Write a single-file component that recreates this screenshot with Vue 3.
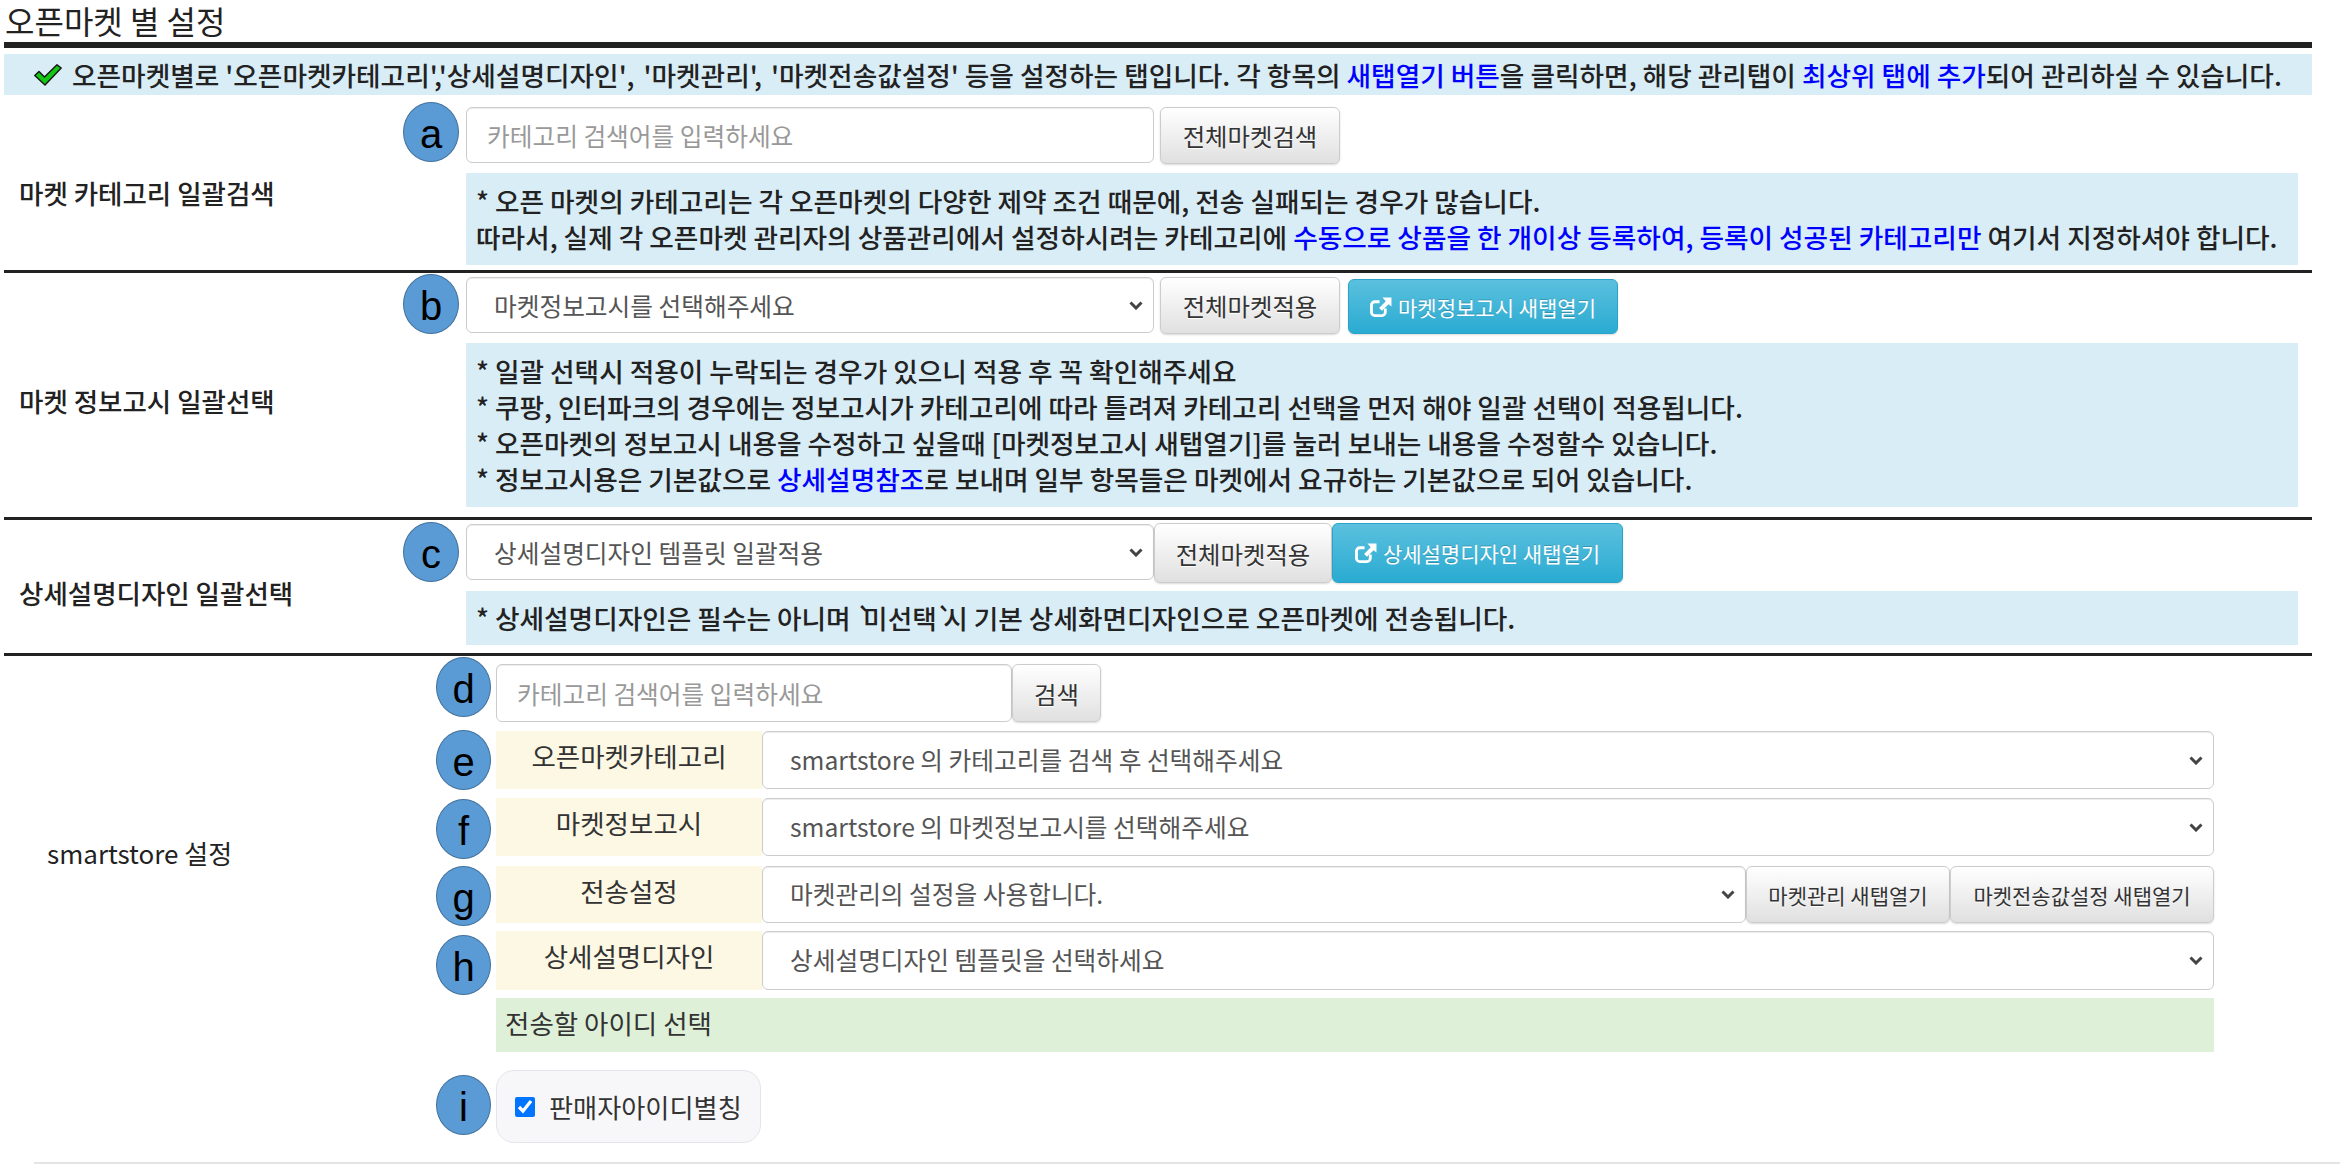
<script setup>
const noteB = [
  '* 일괄 선택시 적용이 누락되는 경우가 있으니 적용 후 꼭 확인해주세요',
  '* 쿠팡, 인터파크의 경우에는 정보고시가 카테고리에 따라 틀려져 카테고리 선택을 먼저 해야 일괄 선택이 적용됩니다.',
  '* 오픈마켓의 정보고시 내용을 수정하고 싶을때 [마켓정보고시 새탭열기]를 눌러 보내는 내용을 수정할수 있습니다.',
]
</script>

<template>
  <div class="page">
    <h1 class="title">오픈마켓 별 설정</h1>
    <div class="rule thick"></div>
    <div class="banner">
      <svg class="check" viewBox="0 0 28 22" width="28" height="22"><path d="M.8 11.5 5 7.5l5.5 5.5L23 .8l4.2 3.2L11 21z" fill="#12c812" stroke="#1a1a1a" stroke-width="1.5" stroke-linejoin="round"/></svg>
      <span>오픈마켓별로 '오픈마켓카테고리','상세설명디자인'<span class="wide">, '마켓관리', </span>'마켓전송값설정' 등을 설정하는 탭입니다. 각 항목의 <b>새탭열기 버튼</b>을 클릭하면, 해당 관리탭이 <b>최상위 탭에 추가</b>되어 관리하실 수 있습니다.</span>
    </div>

    <section class="sec sec-a">
      <div class="label">마켓 카테고리 일괄검색</div>
      <div class="body">
        <div class="ctl">
          <span class="badge ba">a</span>
          <input class="field w688" placeholder="카테고리 검색어를 입력하세요" />
          <button class="btn w180 ml6">전체마켓검색</button>
        </div>
        <div class="note h92">
          <p>* 오픈 마켓의 카테고리는 각 오픈마켓의 다양한 제약 조건 때문에, 전송 실패되는 경우가 많습니다.</p>
          <p>따라서, 실제 각 오픈마켓 관리자의 상품관리에서 설정하시려는 카테고리에 <b>수동으로 상품을 한 개이상 등록하여, 등록이 성공된 카테고리만</b> 여기서 지정하셔야 합니다.</p>
        </div>
      </div>
    </section>
    <div class="rule"></div>

    <section class="sec sec-b">
      <div class="label">마켓 정보고시 일괄선택</div>
      <div class="body">
        <div class="ctl">
          <span class="badge bb">b</span>
          <select class="field w688"><option>마켓정보고시를 선택해주세요</option></select>
          <button class="btn w180 ml6">전체마켓적용</button>
          <button class="btn info ml8 w270">
            <svg class="ext" viewBox="0 0 23 21" width="22" height="20"><path d="M16 12v4a3.5 3.5 0 0 1-3.5 3.5H5A3.5 3.5 0 0 1 1.5 16V8.5A3.5 3.5 0 0 1 5 5h5" fill="none" stroke="#fff" stroke-width="3"/><path d="M13 .5h9.5V10l-3-2.5-7 7-3-3 7-7z" fill="#fff"/></svg>
            마켓정보고시 새탭열기
          </button>
        </div>
        <div class="note h164">
          <p v-for="line in noteB" :key="line">{{ line }}</p>
          <p>* 정보고시용은 기본값으로 <b>상세설명참조</b>로 보내며 일부 항목들은 마켓에서 요규하는 기본값으로 되어 있습니다.</p>
        </div>
      </div>
    </section>
    <div class="rule"></div>

    <section class="sec sec-c">
      <div class="label">상세설명디자인 일괄선택</div>
      <div class="body">
        <div class="ctl">
          <span class="badge bc">c</span>
          <select class="field w688"><option>상세설명디자인 템플릿 일괄적용</option></select>
          <button class="btn w178 tall">전체마켓적용</button>
          <button class="btn info w291 tall">
            <svg class="ext" viewBox="0 0 23 21" width="22" height="20"><path d="M16 12v4a3.5 3.5 0 0 1-3.5 3.5H5A3.5 3.5 0 0 1 1.5 16V8.5A3.5 3.5 0 0 1 5 5h5" fill="none" stroke="#fff" stroke-width="3"/><path d="M13 .5h9.5V10l-3-2.5-7 7-3-3 7-7z" fill="#fff"/></svg>
            상세설명디자인 새탭열기
          </button>
        </div>
        <div class="note h54">
          <p>* 상세설명디자인은 필수는 아니며 <span class="tick">`</span>미선택<span class="tick">`</span>시 기본 상세화면디자인으로 오픈마켓에 전송됩니다.</p>
        </div>
      </div>
    </section>
    <div class="rule"></div>

    <section class="sec sec-d">
      <div class="label store">smartstore 설정</div>
      <div class="body2">
        <div class="r rd">
          <span class="badge b2 bd">d</span>
          <input class="field w515" placeholder="카테고리 검색어를 입력하세요" />
          <button class="btn small-search">검색</button>
        </div>
        <div class="r re">
          <span class="badge b2 be">e</span>
          <div class="tag">오픈마켓카테고리</div>
          <select class="field grow"><option>smartstore 의 카테고리를 검색 후 선택해주세요</option></select>
        </div>
        <div class="r rf">
          <span class="badge b2 bf">f</span>
          <div class="tag">마켓정보고시</div>
          <select class="field grow"><option>smartstore 의 마켓정보고시를 선택해주세요</option></select>
        </div>
        <div class="r rg">
          <span class="badge b2 bg">g</span>
          <div class="tag">전송설정</div>
          <select class="field grow"><option>마켓관리의 설정을 사용합니다.</option></select>
          <button class="btn sm w204">마켓관리 새탭열기</button>
          <button class="btn sm w264">마켓전송값설정 새탭열기</button>
        </div>
        <div class="r rh">
          <span class="badge b2 bh">h</span>
          <div class="tag">상세설명디자인</div>
          <select class="field grow"><option>상세설명디자인 템플릿을 선택하세요</option></select>
        </div>
        <div class="green">전송할 아이디 선택</div>
        <div class="r ri">
          <span class="badge b2 bi">i</span>
          <label class="seller"><input type="checkbox" checked /><span>판매자아이디별칭</span></label>
        </div>
      </div>
    </section>
    <div class="rule light"></div>
  </div>
</template>

<style>
html, body { margin: 0; background: #fff; }
</style>

<style scoped>
.page {
  width: 2340px; height: 1173px; box-sizing: border-box; padding-top: 1px;
  font-family: "Noto Sans CJK KR", "Noto Sans", sans-serif; color: #222; font-size: 26.7px; position: relative;
}
.title { margin: 0 0 0 5px; height: 41px; font-size: 32px; line-height: 38px; font-weight: 400; color: #222; white-space: nowrap; }
.rule { height: 3px; background: #222; margin: 0 28px 0 4px; }
.rule.thick { height: 6px; }
.rule.light { height: 2px; background: #e4e4e4; margin: 0 0 0 34px; }
.banner {
  margin: 6px 28px 0 4px; height: 41px; background: #d9edf7; display: flex; align-items: center; padding-left: 30px;
  gap: 10px; font-size: 26.7px; white-space: nowrap; color: #222; font-weight: 500;
}
.wide { word-spacing: 3px; }
.banner b, .note b { font-weight: 500; color: #00f; }
.check { flex: none; }
.sec { display: grid; grid-template-columns: 466px 1fr; margin-right: 28px; }
.label { padding-left: 19px; font-size: 26.5px; align-self: center; color: #222; white-space: nowrap; padding-top: 11px; font-weight: 500; }
.sec-a { height: 175px; }
.sec-a .body { padding-top: 12px; }
.sec-a .label { padding-top: 20px; }
.sec-b { height: 244px; }
.sec-b .body { padding-top: 4px; }
.sec-c { height: 133px; }
.sec-c .body { padding-top: 4px; }
.sec-d { grid-template-columns: 496px 1fr; height: 506px; }
.label.store { padding-left: 47px; padding-top: 0; padding-bottom: 114px; font-size: 26px; font-weight: 400; }
.body { min-width: 0; }
.ctl { display: flex; position: relative; align-items: flex-start; height: 56px; }
.badge {
  position: absolute; left: -63px; width: 56px; height: 60px; box-sizing: border-box; border-radius: 50%;
  background: #5b9bd5; border: 1.5px solid #41719c; color: #000; display: flex; align-items: center; justify-content: center;
  font-size: 40px; line-height: 1; font-family: "Liberation Sans", sans-serif; padding-top: 3px;
}
.ba { top: -5px; }
.bb { top: -3px; }
.bc { top: -2px; }
.badge.b2 { left: -60px; width: 55px; }
.bd { top: -7px; }
.be { top: -1px; }
.bf { top: 1px; }
.bg { top: 0; }
.bh { top: 4px; }
.bi { top: 5px; }
.field {
  box-sizing: border-box; height: 56px; background-color: #fff; border: 1px solid #ccc; border-radius: 6px; font: inherit; font-size: 24.7px;
  color: #555; padding: 0 20px; box-shadow: inset 0 1px 1px rgba(0,0,0,.075); outline: none; min-width: 0;
}
.field::placeholder { color: #999; opacity: 1; }
select.field {
  padding: 0 30px 0 27px; appearance: none; -webkit-appearance: none;
  background-image: url("data:image/svg+xml,%3Csvg xmlns='http://www.w3.org/2000/svg' width='14' height='9'%3E%3Cpath d='M1.5 1.5 7 7l5.5-5.5' fill='none' stroke='%23444' stroke-width='3'/%3E%3C/svg%3E");
  background-repeat: no-repeat; background-position: right 10px center; background-size: 14px 9px;
}
.r select.field { padding-bottom: 3px; }
.w688 { width: 688px; flex: none; }
.w515 { width: 516px; flex: none; }
.grow { flex: 1; }
.btn {
  box-sizing: border-box; height: 57px; border: 1px solid #ccc; border-radius: 6px; font: inherit; font-size: 24.4px; color: #333;
  background: linear-gradient(#fff, #e0e0e0); padding: 0; text-shadow: 0 1px 0 #fff; box-shadow: 0 1px 2px rgba(0,0,0,.15); flex: none; white-space: nowrap;
}
.w180 { width: 180px; }
.w178 { width: 178px; }
.ml6 { margin-left: 6px; }
.ml8 { margin-left: 8px; }
.btn.info {
  background: linear-gradient(#5bc0de, #2aabd2); border-color: #28a4c9; color: #fff; font-size: 21px; text-shadow: 0 -1px 0 rgba(0,0,0,.2);
  display: flex; align-items: center; justify-content: center; gap: 6px;
}
.ml8.info { height: 55px; margin-top: 2px; }
.w270 { width: 270px; }
.w291 { width: 291px; }
.tall { height: 60px; margin-top: -1px; }
.note {
  box-sizing: border-box; margin: 10px 14px 0 0; background: #d9edf7; padding: 0 0 0 10px; display: flex; flex-direction: column;
  justify-content: center; color: #222; font-size: 26.7px; line-height: 36px; white-space: nowrap; font-weight: 500;
}
.note p { margin: 0; }
.tick { letter-spacing: -10px; }
.h92 { height: 92px; }
.h164 { height: 164px; }
.h54 { height: 54px; margin-top: 11px; }
.body2 { display: flex; flex-direction: column; width: 1718px; }
.r { display: flex; position: relative; align-items: stretch; }
.rd { margin-top: 8px; height: 58px; }
.re { margin-top: 9px; height: 58px; }
.rf { margin-top: 9px; height: 58px; }
.rg { margin-top: 10px; height: 57px; }
.rh { margin-top: 8px; height: 59px; }
.r .field { height: 100%; }
.tag {
  width: 266px; flex: none; background: #fcf8e3; text-align: center; font-size: 26.5px; color: #333; line-height: 50px;
}
.small-search { width: 89px; height: 58px; }
.sm { font-size: 21px; height: 57px; }
.w204 { width: 204px; }
.w264 { width: 264px; margin-left: 0; }
.green {
  margin-top: 8px; height: 54px; background: #dff0d8; padding-left: 9px; font-size: 26.5px; line-height: 50px; color: #333; box-sizing: border-box;
}
.ri { margin-top: 18px; height: 73px; }
.seller {
  width: 265px; box-sizing: border-box; border: 1px solid #e4e4ea; border-radius: 18px; background: #f7f7fa; display: flex; align-items: center;
  gap: 14px; padding-left: 18px; font-size: 26.2px; color: #333; white-space: nowrap;
}
.seller input { width: 20px; height: 20px; margin: 0; accent-color: #0075ff; flex: none; }
</style>
